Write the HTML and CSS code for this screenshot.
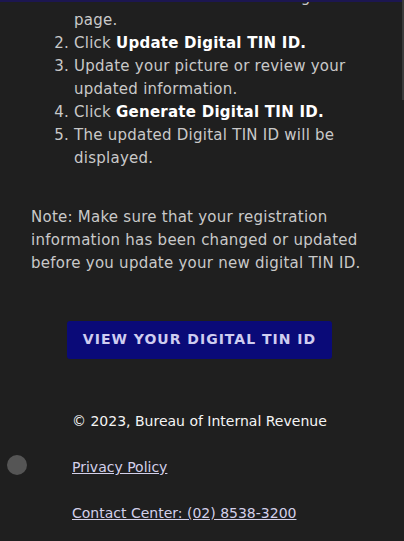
FILE: index.html
```html
<!DOCTYPE html>
<html lang="en">
<head>
  <meta charset="UTF-8">
  <meta name="viewport" content="width=device-width, initial-scale=1.0">
  <title>Digital TIN ID</title>
  <link rel="stylesheet" href="styles.css">
</head>
<body>
  <div class="topline"></div>
  <div class="scroll-thumb"></div>
  <div class="page">
    <ol class="steps">
      <li class="cont">the <b>TIN ID</b> button in the navigation page.</li>
      <li value="2">Click <b>Update Digital TIN ID.</b></li>
      <li>Update your picture or review your updated information.</li>
      <li>Click <b>Generate Digital TIN ID.</b></li>
      <li>The updated Digital TIN ID will be displayed.</li>
    </ol>
    <p class="note">Note: Make sure that your registration information has been changed or updated before you update your new digital TIN ID.</p>
    <div class="action">
      <a class="btn" href="#">VIEW YOUR DIGITAL TIN ID</a>
    </div>
    <footer class="footer">
      <div class="copy">© 2023, Bureau of Internal Revenue</div>
      <a href="#">Privacy Policy</a>
      <a href="#">Contact Center: (02) 8538-3200</a>
    </footer>
  </div>
  <div class="dot"></div>
</body>
</html>
```

FILE: styles.css
```css
body {
  background: #1f1f1f;
  font-family: "DejaVu Sans", sans-serif;
  color: #c9c9c9;
  margin: 0;
  overflow: hidden;
}
.topline {
  position: fixed;
  top: 0;
  left: 0;
  right: 0;
  height: 2px;
  background: #1c1650;
}
.scroll-thumb {
  position: fixed;
  top: 0;
  right: 0;
  width: 2px;
  height: 100px;
  background: #3a3a3a;
}
.page {
  margin-top: -14px;
  padding: 0 31px;
  font-size: 15px;
  letter-spacing: 0.25px;
  line-height: 23px;
}
.steps {
  margin: 0;
  padding-left: 43px;
}
/* first step starts above the visible area */
.steps .cont {
  list-style: none;
}
.steps b {
  color: #fff;
  font-weight: 600;
}
.note {
  margin: 36px 0 0;
}
.action {
  display: flex;
  justify-content: center;
  margin-top: 46px;
}
.btn {
  display: block;
  background: #0a0a78;
  color: #cfcdf0;
  text-decoration: none;
  font-size: 14px;
  font-weight: 600;
  letter-spacing: 1px;
  padding: 7px 16px 8px;
  border-radius: 3px;
  margin-left: -5px;
}
.footer {
  display: flex;
  flex-direction: column;
  gap: 23px;
  margin-top: 51px;
  padding-left: 41px;
  font-size: 14px;
  letter-spacing: 0;
}
.copy {
  color: #f4f4f4;
}
.footer a {
  color: #d3d0ea;
  text-decoration: underline;
  align-self: flex-start;
}
.dot {
  position: fixed;
  left: 7px;
  top: 455px;
  width: 20px;
  height: 20px;
  border-radius: 50%;
  background: #555;
}
```
